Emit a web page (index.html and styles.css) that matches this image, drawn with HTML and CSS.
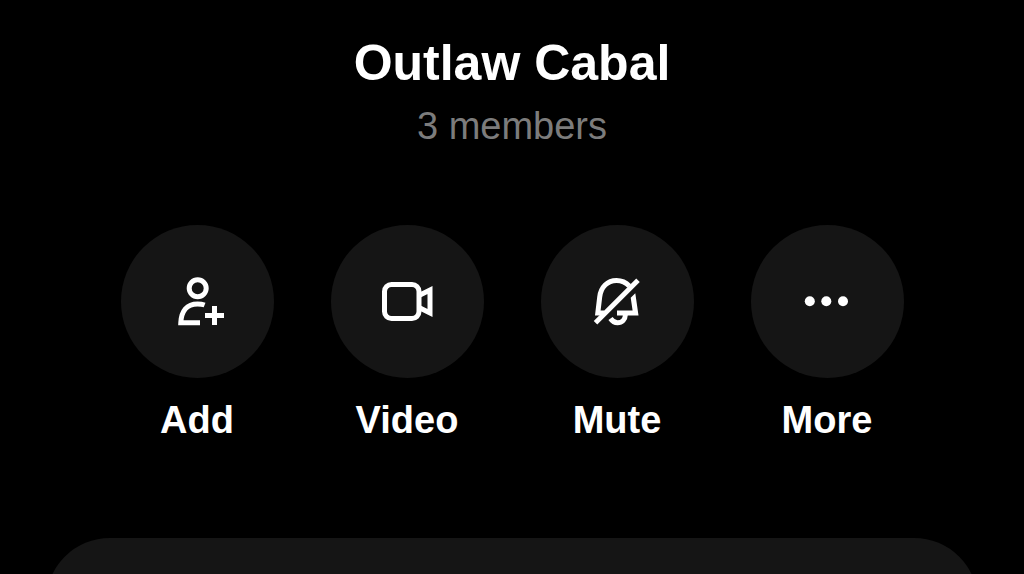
FILE: index.html
```html
<!DOCTYPE html>
<html lang="en">
<head>
<meta charset="utf-8">
<meta name="viewport" content="width=device-width, initial-scale=1">
<title>Outlaw Cabal</title>
<link rel="stylesheet" href="styles.css">
</head>
<body>
<main class="page">
  <header class="header">
    <h1 class="title">Outlaw Cabal</h1>
    <p class="members">3 members</p>
  </header>
  <div class="actions">
    <button class="action" type="button">
      <span class="disc">
        <svg class="icon" viewBox="5 10 64 64" aria-hidden="true">
          <circle cx="37.7" cy="28.3" r="8.5"/>
          <path d="M44.6 45C42.5 44.200 40 43.900 37.500 43.900C27 43.900 21.300 51 20.800 62.700H40"/>
          <path d="M45 55.600H64M54.500 46V65"/>
        </svg>
      </span>
      <span class="label">Add</span>
    </button>
    <button class="action" type="button">
      <span class="disc">
        <svg class="icon" viewBox="8 10 64 64" aria-hidden="true">
          <rect x="17.500" y="24.500" width="34.500" height="34" rx="7"/>
          <path d="M52 35.500L63 30V53L52 47.500"/>
        </svg>
      </span>
      <span class="label">Video</span>
    </button>
    <button class="action" type="button">
      <span class="disc">
        <svg class="icon" viewBox="8 10 64 64" aria-hidden="true">
          <path d="M27 53H20.800L22.700 37C23.800 27 30.500 20.500 39.500 20.500C44.500 20.500 49 22.500 52.300 26"/>
          <path d="M18.500 62.700L61 20.200"/>
          <path class="solid" d="M53.700 37.800L58.300 33.200L61.500 55.500H40V50.500H55.600Z"/>
          <path d="M33.500 58.500C35.300 61.200 37.500 62.700 40.500 62.700C45 62.700 48.300 59.500 48.500 54"/>
        </svg>
      </span>
      <span class="label">Mute</span>
    </button>
    <button class="action" type="button">
      <span class="disc">
        <svg class="icon" viewBox="8 10 64 64" aria-hidden="true">
          <circle class="solid" cx="22.800" cy="41.200" r="5"/>
          <circle class="solid" cx="39.300" cy="41.200" r="5"/>
          <circle class="solid" cx="56" cy="41.200" r="5"/>
        </svg>
      </span>
      <span class="label">More</span>
    </button>
  </div>
  <section class="sheet" aria-label="Details"></section>
</main>
</body>
</html>
```
FILE: styles.css
```css
* {
  box-sizing: border-box;
}

body {
  margin: 0;
  background: #000;
  color: #fff;
  font-family: "Liberation Sans", Arial, sans-serif;
}

.page {
  display: flex;
  flex-direction: column;
  height: 100vh;
  padding: 33px 46px 0;
  overflow: hidden;
}

.header {
  text-align: center;
}

.title {
  margin: 0;
  font-size: 50px;
  line-height: 60px;
  font-weight: 700;
}

.members {
  margin: 9px 0 0;
  color: #7c7c7c;
  font-size: 38px;
  line-height: 48px;
}

.actions {
  display: flex;
  justify-content: center;
  gap: 57px;
  margin-top: 75px;
}

.action {
  display: flex;
  flex-direction: column;
  align-items: center;
  gap: 18px;
  padding: 0;
  border: 0;
  background: none;
  color: inherit;
  font: inherit;
  cursor: pointer;
}

.disc {
  display: grid;
  place-items: center;
  width: 153px;
  height: 153px;
  border-radius: 50%;
  background: #151515;
}

.icon {
  width: 64px;
  height: 64px;
  fill: none;
  stroke: #fff;
  stroke-width: 5;
}

.solid {
  fill: #fff;
  stroke: none;
}

.label {
  font-size: 38px;
  line-height: 48px;
  font-weight: 700;
}

.sheet {
  flex: 1 0 128px;
  margin-top: 94px;
  border-radius: 64px 64px 0 0;
  background: #151515;
}
```
